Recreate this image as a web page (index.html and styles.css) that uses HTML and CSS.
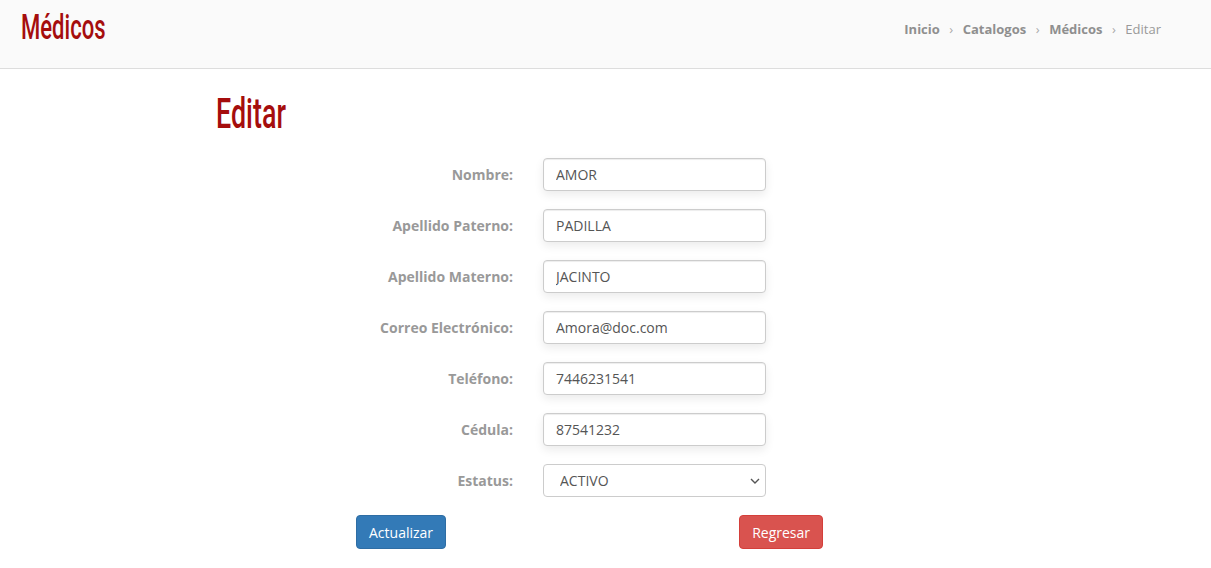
FILE: index.html
```html
<!DOCTYPE html>
<html lang="es">

<head>
    <meta charset="UTF-8">
    <meta name="viewport" content="width=device-width, initial-scale=1.0">
    <title>Médicos - Editar</title>
    <link rel="stylesheet" href="styles.css">
</head>

<body>
    <header class="top-bar">
        <h1 class="page-title"><span>Médicos</span></h1>
        <nav class="breadcrumb">
            <a href="#">Inicio</a>
            <span class="sep">&rsaquo;</span>
            <a href="#">Catalogos</a>
            <span class="sep">&rsaquo;</span>
            <a href="#">Médicos</a>
            <span class="sep">&rsaquo;</span>
            <span class="current">Editar</span>
        </nav>
    </header>

    <main class="content">
        <h2 class="section-title"><span>Editar</span></h2>

        <form class="edit-form">
            <div class="form-row">
                <label for="nombre">Nombre:</label>
                <input type="text" id="nombre" value="AMOR">
            </div>
            <div class="form-row">
                <label for="paterno">Apellido Paterno:</label>
                <input type="text" id="paterno" value="PADILLA">
            </div>
            <div class="form-row">
                <label for="materno">Apellido Materno:</label>
                <input type="text" id="materno" value="JACINTO">
            </div>
            <div class="form-row">
                <label for="correo">Correo Electrónico:</label>
                <input type="text" id="correo" value="Amora@doc.com">
            </div>
            <div class="form-row">
                <label for="telefono">Teléfono:</label>
                <input type="text" id="telefono" value="7446231541">
            </div>
            <div class="form-row">
                <label for="cedula">Cédula:</label>
                <input type="text" id="cedula" value="87541232">
            </div>
            <div class="form-row">
                <label for="estatus">Estatus:</label>
                <div class="select-wrap">
                    <select id="estatus">
                        <option>ACTIVO</option>
                        <option>INACTIVO</option>
                    </select>
                    <svg class="caret" width="10" height="6" viewBox="0 0 10 6">
                        <path d="M1 1l4 4 4-4" fill="none" stroke="#555" stroke-width="1.4"/>
                    </svg>
                </div>
            </div>

            <div class="actions">
                <button type="submit" class="btn btn-primary">Actualizar</button>
                <button type="button" class="btn btn-danger">Regresar</button>
            </div>
        </form>
    </main>
</body>

</html>
```

FILE: styles.css
```css
body {
    margin: 0;
    font-family: "Open Sans", "Liberation Sans", sans-serif;
    font-size: 14px;
    color: #555;
    background-color: #fff;
}

/* barra superior */
.top-bar {
    height: 68px;
    background-color: #fafafa;
    border-bottom: 1px solid #dddddd;
    display: flex;
    align-items: center;
    justify-content: space-between;
    padding: 0 50px 0 21px;
}

/* titulos angostos */
.page-title,
.section-title {
    font-family: Roboto, "Liberation Sans", sans-serif;
    font-weight: 500;
    color: #a50d0d;
    margin: 0;
}

.page-title span,
.section-title span {
    display: inline-block;
    transform-origin: left center;
}

.page-title {
    font-size: 35px;
    line-height: 40px;
    margin-top: -12px;
}

.page-title span {
    transform: scaleX(0.63);
}

.breadcrumb {
    display: flex;
    align-items: center;
    font-size: 13px;
    margin-top: -10px;
}

.breadcrumb a {
    color: #8f8f8f;
    font-weight: bold;
    text-decoration: none;
}

.breadcrumb .sep {
    color: #aaa;
    margin: 0 9.5px;
}

.breadcrumb .current {
    color: #999;
}

/* contenido */
.content {
    padding: 22px 0 0 216px;
}

.section-title {
    font-size: 42px;
    line-height: 46px;
    margin-bottom: 21px;
}

.section-title span {
    transform: scaleX(0.64);
}

.edit-form {
    width: 467px;
    margin-left: 140px;
}

.form-row {
    display: flex;
    align-items: center;
    margin-bottom: 18px;
}

.form-row label {
    width: 157px;
    text-align: right;
    font-weight: bold;
    color: #999;
    margin-right: 30px;
}

.form-row input,
.form-row select {
    box-sizing: border-box;
    width: 223px;
    height: 33px;
    padding: 6px 12px;
    font-family: inherit;
    font-size: 14px;
    color: #555;
    background-color: #fff;
    border: 1px solid #ccc;
    border-radius: 4px;
    box-shadow: inset 0 1px 1px rgba(0, 0, 0, 0.075), 0 4px 10px rgba(0, 0, 0, 0.08);
    outline: none;
}

.select-wrap {
    position: relative;
}

.form-row select {
    appearance: none;
    padding-left: 16px;
    box-shadow: none;
}

.caret {
    position: absolute;
    right: 6px;
    top: 14px;
    pointer-events: none;
}

.actions {
    display: flex;
    justify-content: space-between;
    margin-top: 2px;
}

.btn {
    font-family: inherit;
    font-size: 14px;
    color: #fff;
    height: 34px;
    padding: 6px 12px;
    border-radius: 4px;
    border: 1px solid transparent;
    cursor: pointer;
}

.btn-primary {
    background-color: #337ab7;
    border-color: #2e6da4;
}

.btn-danger {
    background-color: #d9534f;
    border-color: #d43f3a;
}
```
